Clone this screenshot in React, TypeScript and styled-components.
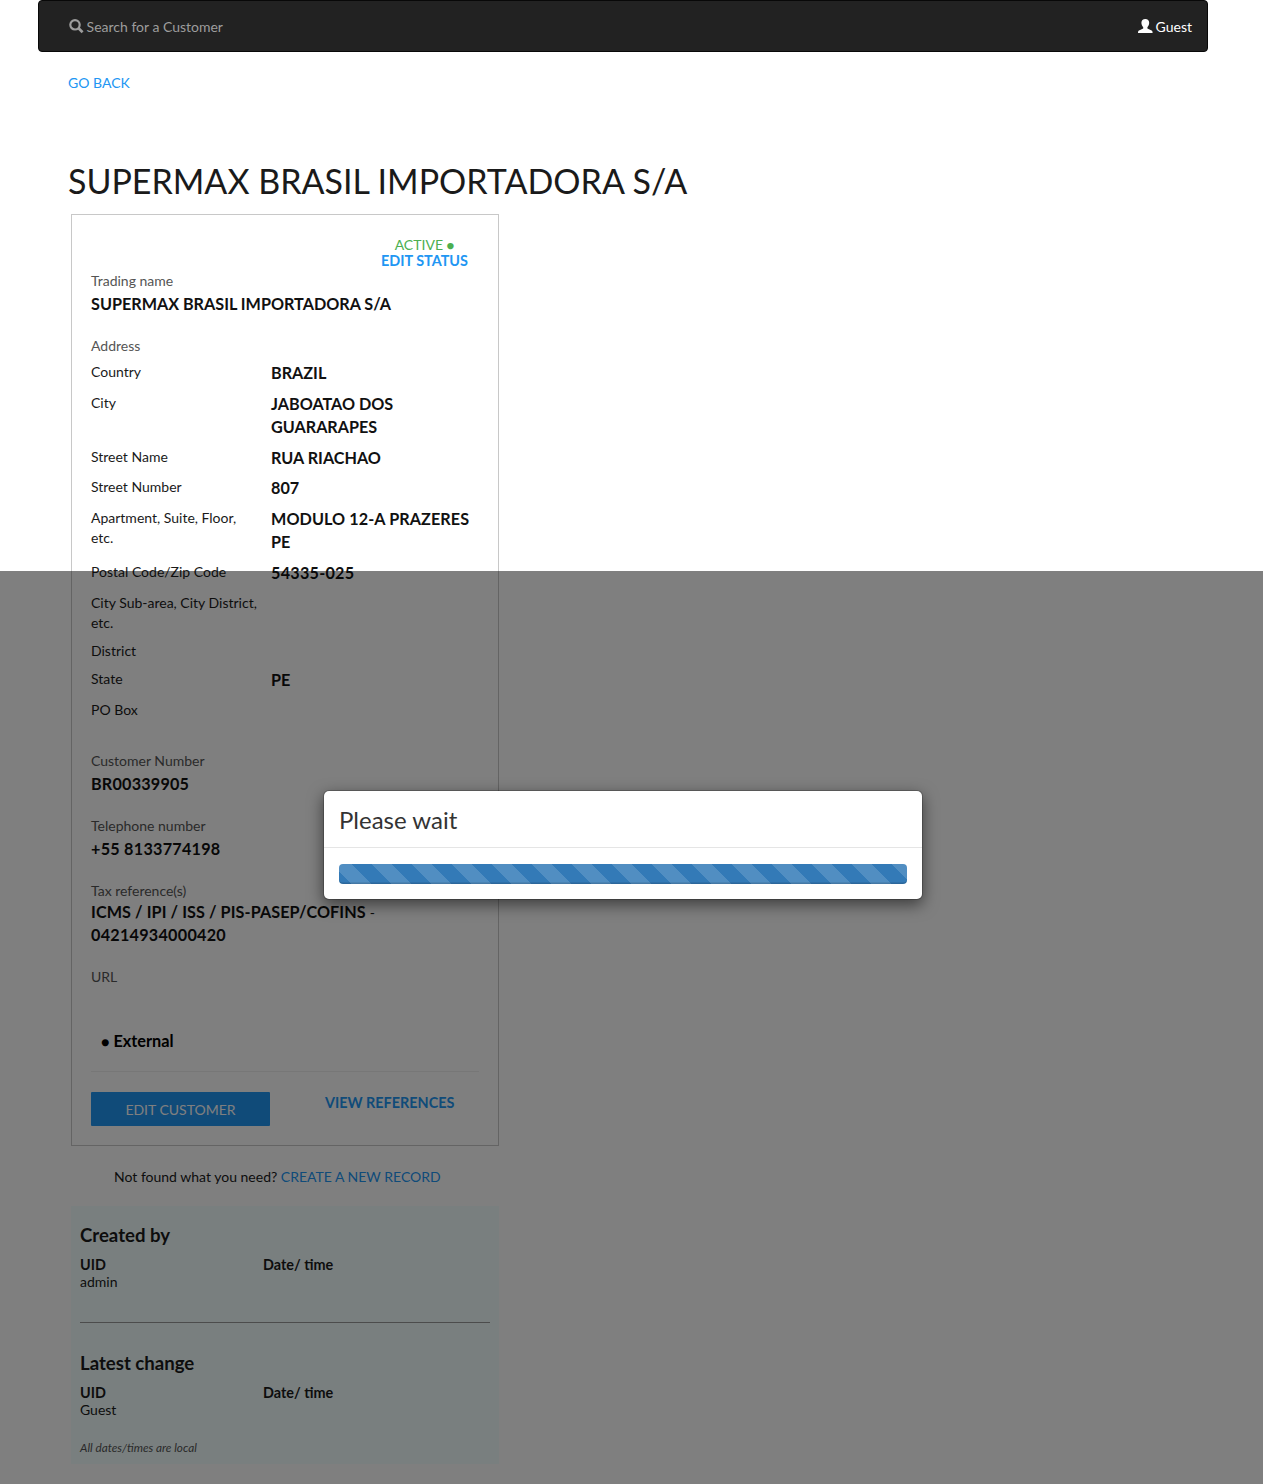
import React from "react";
import styled, { createGlobalStyle } from "styled-components";

const Global = createGlobalStyle`
  *, *::before, *::after { box-sizing: border-box; }
  body {
    margin: 0;
    background: #fff;
    color: #1a1a1a;
    font: 14px/20px Lato, "Liberation Sans", sans-serif;
  }
  h1, h2, h3, h4, p, dl, dd, dt { margin: 0; }
`;

const Page = styled.div`
  position: relative;
  height: 1484px;
  overflow: hidden;
`;

const Container = styled.div`
  width: 1170px;
  margin-left: 38px;
`;

const Navbar = styled.nav`
  display: flex;
  justify-content: space-between;
  height: 52px;
  padding: 16px 15px 14px 30px;
  border: 1px solid #080808;
  border-radius: 4px;
  background: #222;
`;

const NavItem = styled.a<{ $active?: boolean }>`
  display: flex;
  gap: 2.6px;
  color: ${(p) => (p.$active ? "#fff" : "#9d9d9d")};
`;

const NavIcon = styled.svg`
  width: 15px;
  height: 15px;
  margin-top: 2px;
`;

const Content = styled.main`
  display: flex;
  flex-direction: column;
  align-items: flex-start;
  padding: 21px 30px 0;
`;

const Link = styled.a<{ $bold?: boolean }>`
  color: #2196f3;
  font-size: ${(p) => (p.$bold ? "14.4px" : "14px")};
  font-weight: ${(p) => (p.$bold ? 700 : 400)};
`;

const Title = styled.h1`
  margin-top: 68px;
  font-size: 34px;
  font-weight: 400;
  line-height: 40px;
`;

const Card = styled.section`
  width: 428px;
  height: 932px;
  margin: 13px 0 0 3px;
  padding: 22px 19px 0;
  border: 1px solid #c8c8c8;
`;

const Status = styled.div`
  display: flex;
  flex-direction: column;
  align-items: center;
  gap: 1px;
  width: 87px;
  margin: 0 11px 0 auto;
  line-height: 15px;
  white-space: nowrap;
`;

const Active = styled.span`
  color: #4caf50;
`;

const Dot = styled.span`
  font-size: 13px;
  line-height: 1;
`;

const Field = styled.div<{ $gap?: number }>`
  margin-top: ${(p) => p.$gap ?? 20}px;
`;

const FieldLabel = styled.div<{ $compact?: boolean }>`
  height: ${(p) => (p.$compact ? 20 : 22)}px;
  color: #555;
`;

const Value = styled.div<{ $tracking?: number }>`
  font-size: 16.2px;
  font-weight: 700;
  line-height: 22.86px;
  letter-spacing: ${(p) => (p.$tracking ? `${p.$tracking}px` : "normal")};
  color: #111;
`;

const Thin = styled.span`
  font-size: 14px;
  font-weight: 400;
  line-height: 1;
`;

const AddressList = styled.dl`
  margin-top: 4px;
`;

const AddressRow = styled.div`
  display: grid;
  grid-template-columns: 180px 208px;
  margin-bottom: 8px;
`;

const AddressLabel = styled.dt`
  padding-right: 10px;
`;

const External = styled.div`
  display: flex;
  gap: 4px;
  margin: 41.7px 0 20.5px 10px;
  font-size: 16.3px;
  font-weight: 700;
  color: #000;
`;

const ExternalDot = styled.span`
  font-size: 14px;
  line-height: 22px;
  height: 20px;
`;

const Rule = styled.hr<{ $dark?: boolean }>`
  height: 1px;
  margin: 0;
  border: 0;
  background: ${(p) => (p.$dark ? "#999" : "#eee")};
`;

const Actions = styled.div`
  display: flex;
  gap: 55px;
  margin-top: 20px;
  line-height: 21px;
`;

const Button = styled.button`
  width: 179px;
  height: 34px;
  padding: 1px 0 0;
  border: 0;
  border-radius: 1px;
  background: #2196f3;
  color: #fff;
  font: inherit;
`;

const Hint = styled.p`
  margin: 21px 0 0 46px;
`;

const Audit = styled.section`
  width: 428px;
  height: 258px;
  margin: 19px 0 0 3px;
  padding: 19px 9px 0;
  background: #f3ffff;
`;

const AuditTitle = styled.h4`
  font-size: 18.6px;
  font-weight: 700;
  line-height: 20px;
`;

const AuditGrid = styled.div`
  display: grid;
  grid-template-columns: 183px 1fr;
  margin-top: 11px;
  line-height: 17px;
`;

const AuditKey = styled.div`
  font-size: 14.4px;
  font-weight: 700;
`;

const AuditDivider = styled(Rule)`
  margin: 32px 0 30px;
`;

const Note = styled.p`
  margin-top: 22px;
  font-size: 11.75px;
  font-style: italic;
  line-height: 16px;
  color: #555;
`;

const Backdrop = styled.div`
  position: absolute;
  top: 571px;
  left: 0;
  width: 100%;
  height: 913px;
  background: rgba(0, 0, 0, 0.5);
`;

const Modal = styled.div`
  width: 600px;
  margin: 219px 0 0 323px;
  border: 1px solid rgba(0, 0, 0, 0.2);
  border-radius: 6px;
  background: #fff;
  background-clip: padding-box;
  box-shadow: 0 5px 15px rgba(0, 0, 0, 0.5);
`;

const ModalHeader = styled.header`
  padding: 16px 15px 14px;
  border-bottom: 1px solid #e5e5e5;
  color: #333;
`;

const ModalTitle = styled.h3`
  font-size: 24px;
  font-weight: 400;
  line-height: 26px;
`;

const ModalBody = styled.div`
  padding: 16px 15px 15px;
`;

const Progress = styled.div`
  height: 20px;
  border-radius: 4px;
  background-color: #337ab7;
  background-image: linear-gradient(
    45deg,
    rgba(255, 255, 255, 0.15) 25%,
    transparent 25%,
    transparent 50%,
    rgba(255, 255, 255, 0.15) 50%,
    rgba(255, 255, 255, 0.15) 75%,
    transparent 75%,
    transparent
  );
  background-size: 40px 40px;
  background-position: -7px 0;
  box-shadow: inset 0 -1.4px 0 rgba(0, 0, 0, 0.15);
`;

const address: { label: string; value?: string; tracking?: number }[] = [
  { label: "Country", value: "BRAZIL" },
  { label: "City", value: "JABOATAO DOS GUARARAPES" },
  { label: "Street Name", value: "RUA RIACHAO" },
  { label: "Street Number", value: "807" },
  { label: "Apartment, Suite, Floor, etc.", value: "MODULO 12-A PRAZERES PE", tracking: 0.08 },
  { label: "Postal Code/Zip Code", value: "54335-025", tracking: 0.25 },
  { label: "City Sub-area, City District, etc." },
  { label: "District" },
  { label: "State", value: "PE" },
  { label: "PO Box" },
];

function AuditEntry({ title, uid }: { title: string; uid: string }) {
  return (
    <>
      <AuditTitle>{title}</AuditTitle>
      <AuditGrid>
        <div>
          <AuditKey>UID</AuditKey>
          <div>{uid}</div>
        </div>
        <AuditKey>Date/ time</AuditKey>
      </AuditGrid>
    </>
  );
}

export default function App() {
  return (
    <Page>
      <Global />
      <Container>
        <Navbar>
          <NavItem>
            <NavIcon viewBox="0 0 15 15">
              <circle cx="6" cy="5.8" r="4.7" fill="none" stroke="currentColor" strokeWidth="2.2" />
              <path d="M9.3 9.1L13.6 13.2" stroke="currentColor" strokeWidth="2.7" />
            </NavIcon>
            Search for a Customer
          </NavItem>
          <NavItem $active>
            <NavIcon viewBox="0 0 15 15">
              <path
                fill="currentColor"
                d="M7.3 0C9.7 0 11.2 1.4 11.2 3.8C11.2 5.6 10.4 7.2 9.4 8.2V9.6L13.6 11.4C14.2 11.7 14.6 12.3 14.6 14H0C0 12.3 .4 11.7 1 11.4L5.2 9.6V8.2C4.2 7.2 3.4 5.6 3.4 3.8C3.4 1.4 4.9 0 7.3 0Z"
              />
            </NavIcon>
            Guest
          </NavItem>
        </Navbar>
        <Content>
          <Link>GO BACK</Link>
          <Title>SUPERMAX BRASIL IMPORTADORA S/A</Title>
          <Card>
            <Status>
              <Active>
                ACTIVE <Dot>●</Dot>
              </Active>
              <Link $bold>EDIT STATUS</Link>
            </Status>
            <Field $gap={3}>
              <FieldLabel>Trading name</FieldLabel>
              <Value>SUPERMAX BRASIL IMPORTADORA S/A</Value>
            </Field>
            <Field $gap={20.1}>
              <FieldLabel>Address</FieldLabel>
              <AddressList>
                {address.map((row) => (
                  <AddressRow key={row.label}>
                    <AddressLabel>{row.label}</AddressLabel>
                    {row.value && (
                      <Value as="dd" $tracking={row.tracking}>
                        {row.value}
                      </Value>
                    )}
                  </AddressRow>
                ))}
              </AddressList>
            </Field>
            <Field $gap={31.3}>
              <FieldLabel>Customer Number</FieldLabel>
              <Value $tracking={0.2}>BR00339905</Value>
            </Field>
            <Field>
              <FieldLabel>Telephone number</FieldLabel>
              <Value $tracking={0.25}>+55 8133774198</Value>
            </Field>
            <Field>
              <FieldLabel $compact>Tax reference(s)</FieldLabel>
              <Value $tracking={0.08}>
                ICMS / IPI / ISS / PIS-PASEP/COFINS <Thin>-</Thin>
              </Value>
              <Value $tracking={0.25}>04214934000420</Value>
            </Field>
            <Field $gap={20.4}>
              <FieldLabel>URL</FieldLabel>
            </Field>
            <External>
              <ExternalDot>●</ExternalDot>
              <span>External</span>
            </External>
            <Rule />
            <Actions>
              <Button>EDIT CUSTOMER</Button>
              <Link $bold>VIEW REFERENCES</Link>
            </Actions>
          </Card>
          <Hint>
            Not found what you need? <Link>CREATE A NEW RECORD</Link>
          </Hint>
          <Audit>
            <AuditEntry title="Created by" uid="admin" />
            <AuditDivider $dark />
            <AuditEntry title="Latest change" uid="Guest" />
            <Note>All dates/times are local</Note>
          </Audit>
        </Content>
      </Container>
      <Backdrop>
        <Modal>
          <ModalHeader>
            <ModalTitle>Please wait</ModalTitle>
          </ModalHeader>
          <ModalBody>
            <Progress />
          </ModalBody>
        </Modal>
      </Backdrop>
    </Page>
  );
}
